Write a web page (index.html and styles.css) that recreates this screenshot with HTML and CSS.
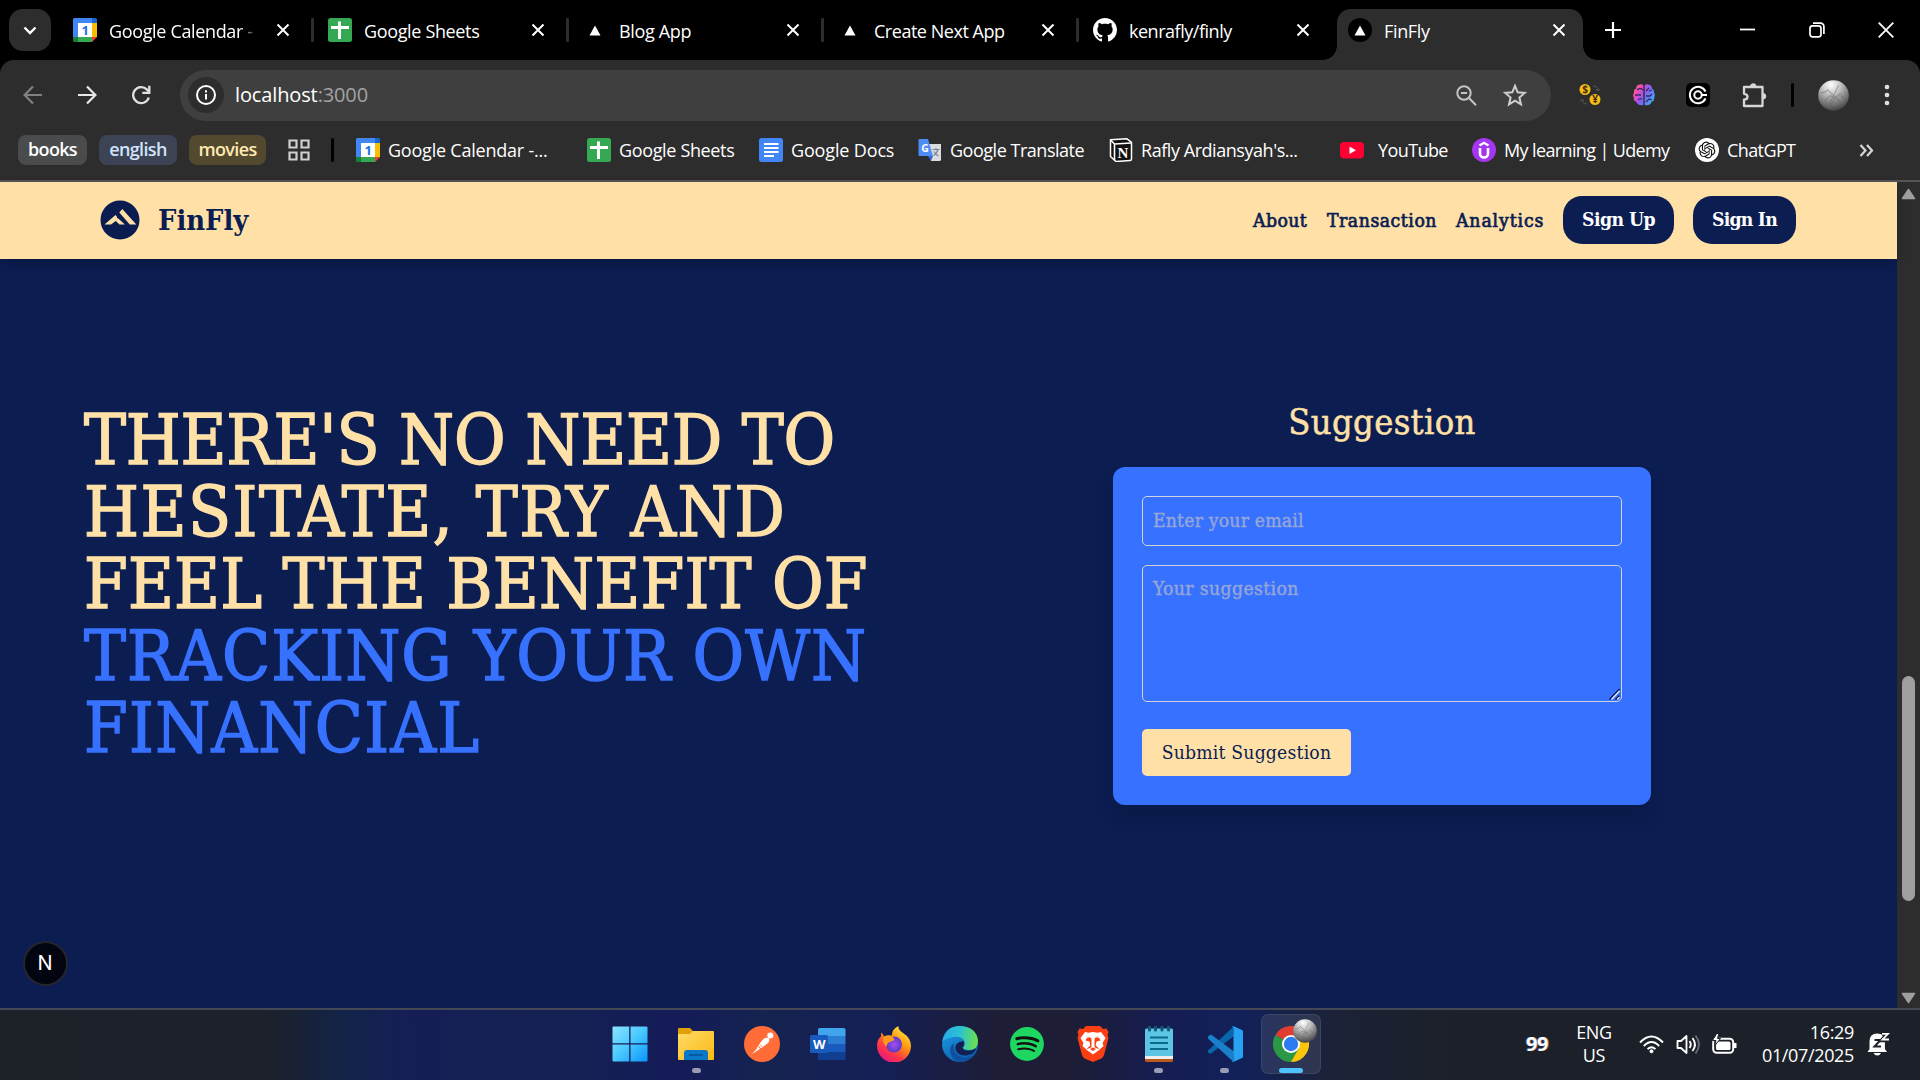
FILE: index.html
```html
<!DOCTYPE html>
<html lang="en">
<head>
<meta charset="utf-8">
<title>FinFly</title>
<link rel="stylesheet" href="styles.css">
</head>
<body>
<svg class="defs" width="0" height="0">
  <defs>
    <symbol id="x" viewBox="0 0 14 14"><path d="M1.5 1.5l11 11M12.5 1.5l-11 11" stroke="currentColor" stroke-width="2" fill="none"/></symbol>
    <symbol id="tri" viewBox="0 0 12 12"><path d="M6 0.5L12 11.5H0z" fill="#fff"/></symbol>
    <symbol id="gcal" viewBox="0 0 24 24">
      <path d="M1.5 0H19v5H0V1.500A1.500 1.500 0 0 1 1.500 0z" fill="#4285f4"/><path d="M0 4h5v15H0z" fill="#4285f4"/>
      <path d="M19 0h3.500A1.500 1.500 0 0 1 24 1.500V5h-5z" fill="#1967d2"/><path d="M19 5h5v14h-5z" fill="#fbbc04"/>
      <path d="M0 19h5v5H1.500A1.500 1.500 0 0 1 0 22.500z" fill="#188038"/><path d="M5 19h14v5H5z" fill="#34a853"/>
      <path d="M19 19h5l-5 5z" fill="#ea4335"/><path d="M5 5h14v14H5z" fill="#fff"/>
      <text x="12" y="16.700" font-family="Open Sans, sans-serif" font-size="13" font-weight="700" fill="#1a73e8" text-anchor="middle">1</text>
    </symbol>
    <symbol id="gsheet" viewBox="0 0 24 24"><rect width="24" height="24" rx="2.500" fill="#34a853"/><path d="M10 3.500h3V8h8v3h-8v10h-3V11H3V8h7z" fill="#fff"/></symbol>
    <symbol id="moon" viewBox="0 0 30 30">
      <defs><radialGradient id="mg" cx=".42" cy=".15" r=".95"><stop offset="0" stop-color="#fff"/><stop offset=".3" stop-color="#c9c9c9"/><stop offset=".6" stop-color="#858585"/><stop offset="1" stop-color="#2c2c2c"/></radialGradient></defs>
      <circle cx="15" cy="15" r="14.800" fill="url(#mg)"/><path d="M3 12q4 1 7-3M6 21l6-6 4 3 6-5M9 9l12 12M20 5l-9 18M12 25l5-9M22 15l4 3" stroke="#666" stroke-width="1" fill="none" opacity=".5"/>
    </symbol>
  </defs>
</svg>

<header class="browser">
  <div class="tabstrip">
    <button class="tab-search"><svg width="14" height="9" viewBox="0 0 14 9"><path d="M1.500 1.500L7 7l5.500-5.500" stroke="#fff" stroke-width="2.400" fill="none"/></svg></button>
    <div class="tab"><svg class="fav"><use href="#gcal"/></svg><span class="tab-title fade">Google Calendar -</span><svg class="close"><use href="#x"/></svg><i class="sep"></i></div>
    <div class="tab"><svg class="fav"><use href="#gsheet"/></svg><span class="tab-title">Google Sheets</span><svg class="close"><use href="#x"/></svg><i class="sep"></i></div>
    <div class="tab"><span class="fav next"><svg><use href="#tri"/></svg></span><span class="tab-title">Blog App</span><svg class="close"><use href="#x"/></svg><i class="sep"></i></div>
    <div class="tab"><span class="fav next"><svg><use href="#tri"/></svg></span><span class="tab-title tight">Create Next App</span><svg class="close"><use href="#x"/></svg><i class="sep"></i></div>
    <div class="tab"><svg class="fav" viewBox="0 0 16 16"><path fill="#fff" d="M8 0C3.580 0 0 3.580 0 8c0 3.540 2.290 6.530 5.470 7.590.4.070.55-.17.55-.38 0-.19-.01-.82-.01-1.490-2.010.37-2.530-.49-2.690-.94-.09-.23-.48-.94-.82-1.130-.28-.15-.68-.52-.01-.53.63-.01 1.080.58 1.230.82.72 1.210 1.870.87 2.330.66.070-.52.28-.87.51-1.070-1.780-.2-3.640-.89-3.640-3.950 0-.87.31-1.590.82-2.150-.08-.2-.36-1.020.08-2.120 0 0 .67-.21 2.200.82.64-.18 1.320-.27 2-.27s1.360.09 2 .27c1.530-1.040 2.200-.82 2.200-.82.44 1.100.16 1.920.08 2.120.51.56.82 1.270.82 2.150 0 3.070-1.870 3.750-3.650 3.950.29.25.54.73.54 1.480 0 1.070-.01 1.930-.01 2.200 0 .21.15.46.55.38A8.010 8.010 0 0 0 16 8c0-4.420-3.580-8-8-8z"/></svg><span class="tab-title tight">kenrafly/finly</span><svg class="close"><use href="#x"/></svg></div>
    <div class="tab active"><span class="fav next disc"><svg><use href="#tri"/></svg></span><span class="tab-title">FinFly</span><svg class="close"><use href="#x"/></svg></div>
    <svg class="new-tab" viewBox="0 0 16 16"><path d="M8 0v16M0 8h16" stroke="#fff" stroke-width="2.200"/></svg>
    <div class="window-controls">
      <svg width="16" height="16" viewBox="0 0 16 16"><path d="M0 7.500h15" stroke="#fff" stroke-width="1.800"/></svg>
      <svg width="16" height="16" viewBox="0 0 16 16" fill="none" stroke="#fff" stroke-width="1.700"><rect x="1" y="3.800" width="11" height="11" rx="2.500"/><path d="M4 1.200h7.500A3.300 3.300 0 0 1 14.900 4.500V12"/></svg>
      <svg width="16" height="16" viewBox="0 0 16 16"><path d="M.7.700l14.600 14.600M15.300.700L.7 15.300" stroke="#fff" stroke-width="1.800"/></svg>
    </div>
  </div>

  <div class="toolbar">
    <div class="nav-icons">
      <svg width="20" height="20" viewBox="0 0 20 20" fill="none" stroke="#808080" stroke-width="2.200"><path d="M19 10H2M10 1.500L1.600 10l8.400 8.500"/></svg>
      <svg width="20" height="20" viewBox="0 0 20 20" fill="none" stroke="#e8e8e8" stroke-width="2.200"><path d="M1 10h17M10 1.500l8.400 8.500-8.400 8.500"/></svg>
      <svg width="20" height="20" viewBox="0 0 20 20" fill="none" stroke="#e0e0e0" stroke-width="2.300"><path d="M17.800 12.500A8 8 0 1 1 16 4.600l2 2.200"/><path d="M18.300.8v7h-7"/></svg>
    </div>
    <div class="omnibox">
      <span class="info"><svg width="20" height="20" viewBox="0 0 20 20"><circle cx="10" cy="10" r="9" fill="none" stroke="#fff" stroke-width="2"/><path d="M10 9v5.500M10 5.300v2.200" stroke="#fff" stroke-width="2"/></svg></span>
      <span class="url">localhost<em>:3000</em></span>
      <svg class="zoom-out" width="21" height="21" viewBox="0 0 21 21" fill="none" stroke="#c4c4c4" stroke-width="2"><circle cx="8" cy="8" r="6.700"/><path d="M5 8h6M13 13l7 7.200"/></svg>
      <svg class="star" width="24" height="24" viewBox="0 0 24 24"><path d="M12 2.800l2.700 6.500 7 .6-5.300 4.600 1.600 6.900-6-3.700-6 3.700 1.600-6.900L2.300 9.900l7-.6z" fill="none" stroke="#cfcfcf" stroke-width="2"/></svg>
    </div>
    <div class="extensions">
      <svg class="e-coins" width="22" height="24" viewBox="0 0 22 24"><circle cx="6" cy="6.500" r="5.500" fill="#f9b916"/><circle cx="16" cy="16.500" r="5.500" fill="#f9b916"/><text x="6" y="10.300" font-size="10" font-weight="700" text-anchor="middle" fill="#40300c" font-family="Open Sans">$</text><text x="16" y="20.300" font-size="10" font-weight="700" text-anchor="middle" fill="#40300c" font-family="Open Sans">¥</text><path d="M14 3q5 0 5 5m-2-2l2 2 2-2M8 21q-5 0-5-5m-2 2l2-2 2 2" stroke="#555" fill="none"/></svg>
      <svg class="e-brain" width="24" height="24" viewBox="0 0 24 24"><defs><linearGradient id="bg" x1="0" y1="0" x2="1" y2=".6"><stop offset="0" stop-color="#ff8a3c"/><stop offset=".3" stop-color="#f748b8"/><stop offset=".6" stop-color="#8a5cf6"/><stop offset="1" stop-color="#3ea6f5"/></linearGradient></defs><path d="M11.300 2.500Q10 .5 7.500 1.500 4 2 4.200 5.500 1.500 6.500 2 9.500.2 12 1.700 14.500 1.500 18 4.500 19q1.500 4 6.800 3zM12.700 2.500Q14 .5 16.500 1.500 20 2 19.800 5.500 22.500 6.500 22 9.500q1.800 2.500.3 5Q22.500 18 19.500 19q-1.500 4-6.800 3z" fill="url(#bg)"/><path d="M5 7q3-3 6 0M3 12h6M6 17q2-2 4-1M14 8l3-3m0 3l3-1M14 13h4l2-2m-6 8l3-3 3 1" stroke="#3a2560" stroke-width="1.300" fill="none"/></svg>
      <svg class="e-c" width="24" height="24" viewBox="0 0 24 24"><rect width="24" height="24" rx="5" fill="#000"/><path d="M19.500 8.500A8.200 8.200 0 1 0 19.500 15.500" fill="none" stroke="#fff" stroke-width="2"/><circle cx="12" cy="12" r="3.700" fill="none" stroke="#fff" stroke-width="2"/><path d="M15 12h6" stroke="#fff" stroke-width="2"/></svg>
      <svg class="e-puzzle" width="26" height="26" viewBox="0 0 26 26"><path d="M3 5h18.500v19H3v-6.300q3.500-.2 3.500-2.900T3 11.800z" fill="none" stroke="#d6d6d6" stroke-width="2.300" stroke-linejoin="round"/><path d="M9.500 4.500a2.800 2.800 0 0 1 5.600 0zM22 11.500a2.800 2.800 0 0 1 0 5.600z" fill="#d6d6d6" stroke="#d6d6d6"/></svg>
      <i class="bar"></i>
      <svg class="avatar" width="31" height="31"><use href="#moon"/></svg>
      <svg class="dots" width="6" height="22" viewBox="0 0 6 22" fill="#e0e0e0"><circle cx="3" cy="3" r="2.300"/><circle cx="3" cy="11" r="2.300"/><circle cx="3" cy="19" r="2.300"/></svg>
    </div>
  </div>

  <div class="bookmarks">
    <span class="chip books">books</span><span class="chip english">english</span><span class="chip movies">movies</span>
    <svg class="grid" width="22" height="22" viewBox="0 0 22 22" fill="none" stroke="#d0d0d0" stroke-width="2.200"><path d="M1.500 1.500h7v7h-7zM13.500 1.500h7v7h-7zM1.500 13.500h7v7h-7zM13.500 13.500h7v7h-7z"/></svg>
    <i class="bar"></i>
    <div class="bm wide cal"><svg><use href="#gcal"/></svg><span>Google Calendar -...</span></div>
    <div class="bm sheets"><svg><use href="#gsheet"/></svg><span>Google Sheets</span></div>
    <div class="bm docs"><svg viewBox="0 0 24 24"><rect width="24" height="24" rx="2.500" fill="#4285f4"/><path d="M5 6h14.500M5 10h14.500M5 14h14.500M5 18h10" stroke="#fff" stroke-width="2"/></svg><span>Google Docs</span></div>
    <div class="bm translate"><svg viewBox="0 0 24 24"><path d="M9 6h14v15.500q0 1.500-1.500 1.500H13z" fill="#dadce0"/><path d="M10 18h5l-2 5z" fill="#3367d6"/><path d="M1.500 1H10l5 17H1.500Q.500 18 .500 17V2q0-1 1-1z" fill="#4e8df6"/><text x="6.800" y="13.500" font-size="10.500" font-weight="700" text-anchor="middle" fill="#fff" font-family="Open Sans">G</text><path d="M14.500 11.500h7M18 10v1.500M20 11.500q-1.500 4.500-4.500 6M16 13.500q1.500 3 4.500 4.500" stroke="#7a8794" stroke-width="1.200" fill="none"/></svg><span>Google Translate</span></div>
    <div class="bm wide rafly"><svg viewBox="0 0 24 24"><path d="M1.500 1.800L18 .8l4.500 3.500V21q0 1.500-1.500 1.600L7 23.500 1.500 18.500z" fill="#111" stroke="#fff" stroke-width="1.500" stroke-linejoin="round"/><path d="M5.500 6L22 5M5.500 6v16.500M5.500 6l-4-4" stroke="#fff" stroke-width="1.600"/><text x="13.800" y="19.500" font-size="15" font-weight="700" text-anchor="middle" fill="#fff" font-family="Liberation Serif">N</text></svg><span>Rafly Ardiansyah's...</span></div>
    <div class="bm youtube"><svg viewBox="0 0 24 24"><rect y="4" width="24" height="16.500" rx="4" fill="#ff0033"/><path d="M9.500 8.500v7.500l6.500-3.700z" fill="#fff"/></svg><span>YouTube</span></div>
    <div class="bm udemy"><svg viewBox="0 0 24 24"><circle cx="12" cy="12" r="12" fill="#a435f0"/><path d="M8 10v5.500a4 4 0 0 0 8 0V10" fill="none" stroke="#fff" stroke-width="2.600"/><path d="M7.500 7.500L12 4.800l4.500 2.700" fill="none" stroke="#fff" stroke-width="2.200"/></svg><span>My learning | Udemy</span></div>
    <div class="bm chatgpt"><svg viewBox="0 0 24 24"><circle cx="12" cy="12" r="12" fill="#fff"/><path transform="translate(3.600 3.600) scale(.7)" fill="#111" d="M22.2819 9.8211a5.9847 5.9847 0 0 0-.5157-4.9108 6.0462 6.0462 0 0 0-6.5098-2.9A6.0651 6.0651 0 0 0 4.9807 4.1818a5.9847 5.9847 0 0 0-3.9977 2.9 6.0462 6.0462 0 0 0 .7427 7.0966 5.98 5.98 0 0 0 .511 4.9107 6.051 6.051 0 0 0 6.5146 2.9001A5.9847 5.9847 0 0 0 13.2599 24a6.0557 6.0557 0 0 0 5.7718-4.2058 5.9894 5.9894 0 0 0 3.9977-2.9001 6.0557 6.0557 0 0 0-.7475-7.0729zm-9.022 12.6081a4.4755 4.4755 0 0 1-2.8764-1.0408l.1419-.0804 4.7783-2.7582a.7948.7948 0 0 0 .3927-.6813v-6.7369l2.02 1.1686a.071.071 0 0 1 .038.052v5.5826a4.504 4.504 0 0 1-4.4945 4.4944zm-9.6607-4.1254a4.4708 4.4708 0 0 1-.5346-3.0137l.142.0852 4.783 2.7582a.7712.7712 0 0 0 .7806 0l5.8428-3.3685v2.3324a.0804.0804 0 0 1-.0332.0615L9.74 19.9502a4.4992 4.4992 0 0 1-6.1408-1.6464zM2.3408 7.8956a4.485 4.485 0 0 1 2.3655-1.9728V11.6a.7664.7664 0 0 0 .3879.6765l5.8144 3.3543-2.0201 1.1685a.0757.0757 0 0 1-.071 0l-4.8303-2.7865A4.504 4.504 0 0 1 2.3408 7.872zm16.5963 3.8558L13.1038 8.364 15.1192 7.2a.0757.0757 0 0 1 .071 0l4.8303 2.7913a4.4944 4.4944 0 0 1-.6765 8.1042v-5.6772a.79.79 0 0 0-.407-.667zm2.0107-3.0231l-.142-.0852-4.7735-2.7818a.7759.7759 0 0 0-.7854 0L9.409 9.2297V6.8974a.0662.0662 0 0 1 .0284-.0615l4.8303-2.7866a4.4992 4.4992 0 0 1 6.6802 4.66zM8.3065 12.863l-2.02-1.1638a.0804.0804 0 0 1-.038-.0567V6.0742a4.4992 4.4992 0 0 1 7.3757-3.4537l-.142.0805L8.704 5.459a.7948.7948 0 0 0-.3927.6813zm1.0976-2.3654l2.602-1.4998 2.6069 1.4998v2.9994l-2.5974 1.4997-2.6067-1.4997Z"/></svg><span>ChatGPT</span></div>
    <svg class="more" width="15" height="13" viewBox="0 0 15 13"><path d="M1.500 1l5 5.500-5 5.500M8 1l5 5.500L8 12" stroke="#d8d8d8" stroke-width="2.200" fill="none"/></svg>
  </div>
</header>

<div class="viewport">
  <div class="page">
    <nav class="site-nav">
      <svg class="logo" viewBox="0 0 40 40"><circle cx="20" cy="20" r="19.500" fill="#0b1c50"/><path d="M4.500 24.500L15.500 15l1.500 1.700v3.300l-6 4.500zM17.500 17.800l7.300 6.700h-5.300l-3.700-3.600zM22.300 9l14 15.500h-6.500L19.300 12.500z" fill="#ffe1a8"/></svg>
      <span class="brand">FinFly</span>
      <a class="link about">About</a><a class="link transaction">Transaction</a><a class="link analytics">Analytics</a>
      <button class="pill up">Sign Up</button><button class="pill in">Sign In</button>
    </nav>
    <main class="content">
      <h1 class="headline">
        <span class="l1">THERE'S NO NEED TO</span>
        <span class="l2">HESITATE, TRY AND</span>
        <span class="l3">FEEL THE BENEFIT OF</span>
        <span class="l4 blue">TRACKING YOUR OWN</span>
        <span class="l5 blue">FINANCIAL</span>
      </h1>
      <section class="suggestion">
        <h2>Suggestion</h2>
        <form class="card">
          <input class="field" type="email" placeholder="Enter your email">
          <div class="area-wrap">
            <textarea class="field area" placeholder="Your suggestion"></textarea>
            <svg class="grip" width="12" height="12" viewBox="0 0 12 12"><path d="M1.500 11.500l10-10.500M7.500 11.500l4-4" stroke="#0b1c50" stroke-width="1.500"/><path d="M3.500 11.500l8-8.500M9.300 11.500l2.200-2.200" stroke="#dfe6fa" stroke-width="1.500"/></svg>
          </div>
          <button class="submit" type="button">Submit Suggestion</button>
        </form>
      </section>
    </main>
    <div class="dev-badge">N</div>
  </div>
  <div class="scrollbar">
    <svg width="15" height="12" viewBox="0 0 15 12"><path d="M7.500 1.500L13.500 10.500h-12z" fill="#9f9f9f" stroke="#9f9f9f" stroke-width="1.500" stroke-linejoin="round"/></svg>
    <i class="thumb"></i>
    <svg width="15" height="12" viewBox="0 0 15 12"><path d="M7.500 10.500L13.500 1.500h-12z" fill="#9f9f9f" stroke="#9f9f9f" stroke-width="1.500" stroke-linejoin="round"/></svg>
  </div>
</div>

<footer class="taskbar">
  <div class="apps">
    <div class="app"><svg viewBox="0 0 36 36"><defs><linearGradient id="wg" x1="0" y1="0" x2="1" y2="1"><stop offset="0" stop-color="#8be4ff"/><stop offset=".5" stop-color="#48c8ff"/><stop offset="1" stop-color="#0a95fb"/></linearGradient></defs><path d="M.5 1.500q0-1 1-1h15.700v16.800H.5zM18.500.500h16q1 0 1 1v15.800h-17zM.5 18.600h16.700v16.900H1.500q-1 0-1-1zM18.500 18.600h17v15.900q0 1-1 1h-16z" fill="url(#wg)"/></svg></div>
    <div class="app run"><svg viewBox="0 0 36 36"><defs><linearGradient id="fg" x1="0" y1="0" x2="1" y2="1"><stop offset="0" stop-color="#ffdc6a"/><stop offset="1" stop-color="#fbb810"/></linearGradient></defs><path d="M0 3q0-1 1-1h11l3 3v5H0z" fill="#e0a008"/><path d="M0 8h12l3-3h20q1 0 1 1v27q0 1-1 1H1q-1 0-1-1z" fill="url(#fg)"/><path d="M6 34v-7q0-3 3-3h18q3 0 3 3v7z" fill="#0a78c9"/><path d="M11 29h14" stroke="#0a4f92" stroke-width="1.500"/></svg></div>
    <div class="app"><svg viewBox="0 0 36 36"><circle cx="18" cy="18" r="18" fill="#ff6c37"/><circle cx="26.300" cy="9.500" r="3" fill="#fff"/><path d="M24.500 12q-3-1-5 1l-5.500 6.500 3 3 7-5.500q2.500-2.500.5-5zM14 20l-1.500 3L8 28l8-5z" fill="#fff"/><path d="M14 17l6 5M13.500 19l4 4" stroke="#ff6c37" stroke-width=".7"/></svg></div>
    <div class="app"><svg viewBox="0 0 36 36"><path d="M8 10V3.500Q8 2 9.500 2h24Q35.500 2 35.500 3.500V10z" fill="#41a5ee"/><path d="M8 10h27.500v8H8z" fill="#2b7cd3"/><path d="M8 18h27.500v8H8z" fill="#185abd"/><path d="M8 26h27.500v6.500q0 1.500-1.500 1.500H9.500Q8 34 8 32.500z" fill="#103f91"/><rect y="9" width="18" height="18" rx="1.500" fill="#185abd"/><text x="9" y="22.700" font-size="13" font-weight="700" text-anchor="middle" fill="#fff" font-family="Open Sans">W</text></svg></div>
    <div class="app"><svg viewBox="0 0 36 36"><defs><linearGradient id="ff" x1=".85" y1="0" x2=".2" y2="1"><stop offset="0" stop-color="#fff44f"/><stop offset=".4" stop-color="#ff980e"/><stop offset=".7" stop-color="#ff3647"/><stop offset="1" stop-color="#e31587"/></linearGradient><radialGradient id="fp"><stop offset="0" stop-color="#a44ef0"/><stop offset="1" stop-color="#5b3bc4"/></radialGradient></defs><path d="M5 6.500q2 1 3 4 3-2 8-1-.5-6 6.500-9.500-.5 4 4.500 7 8 5 8 13A17 17 0 0 1 1 19.500q0-6 4-9z" fill="url(#ff)"/><circle cx="18" cy="18.500" r="8" fill="url(#fp)"/><path d="M7.500 11q4-2 9-.5l2 3.500-6 2.500q-2 1-1.500 4Q6 17 7.500 11z" fill="#ff9a1c"/></svg></div>
    <div class="app"><svg viewBox="0 0 36 36"><defs><linearGradient id="e1" x1="0" y1=".3" x2="1" y2=".4"><stop offset="0" stop-color="#28a8ea"/><stop offset=".5" stop-color="#2cc3d0"/><stop offset="1" stop-color="#6be04a"/></linearGradient><linearGradient id="e2" x1="0" y1="0" x2=".6" y2="1"><stop offset="0" stop-color="#1fa0e8"/><stop offset="1" stop-color="#0a5fb0"/></linearGradient></defs><circle cx="18" cy="18" r="18" fill="url(#e2)"/><path d="M.5 15Q3 0 18 0q17 1 18 15 0 9-9 9-6 0-6-2.500 3-3 1-7Q17 7 .5 15z" fill="url(#e1)"/><path d="M21.500 15q1.500 4-1 6.500 0 3 6.500 3.200 4 0 7-2.400-1 4-5 6-11 3.500-15-3.500-3-8 7.500-9.800z" fill="#121f50"/><path d="M12 17q-2 11 8 14 6 2 12-2.500-6 8-14 7.500Q8 33 8 24q0-4 4-7z" fill="#0f4f9d"/></svg></div>
    <div class="app"><svg viewBox="-.35 -.35 24.700 24.700"><circle cx="12" cy="12" r="10" fill="#111"/><path transform="translate(.4 .4) scale(.967)" fill="#1ed760" d="M12 0C5.400 0 0 5.400 0 12s5.400 12 12 12 12-5.400 12-12S18.660 0 12 0zm5.521 17.340c-.24.359-.66.48-1.021.24-2.820-1.740-6.360-2.101-10.561-1.141-.418.122-.779-.179-.899-.539-.12-.421.18-.78.54-.9 4.560-1.021 8.520-.6 11.640 1.320.42.18.479.659.301 1.020zm1.440-3.300c-.301.42-.841.6-1.262.3-3.239-1.980-8.159-2.580-11.939-1.380-.479.12-1.020-.12-1.140-.6-.12-.48.12-1.021.6-1.141C9.600 9.900 15 10.561 18.720 12.840c.361.181.54.78.241 1.200zm.12-3.360C15.240 8.400 8.820 8.160 5.160 9.301c-.6.179-1.200-.181-1.380-.721-.18-.601.18-1.200.72-1.381 4.260-1.260 11.280-1.020 15.721 1.621.539.3.719 1.020.419 1.560-.299.421-1.020.599-1.559.3z"/></svg></div>
    <div class="app"><svg viewBox="0 0 36 36"><path d="M11 0h14l3 3 3.500-.5L33.500 6l-1 3 1 3-4.500 17q-1 3-5 4.500L18 36l-6-2.500q-4-1.500-5-4.500L2.500 12l1-3-1-3 2-3.500L8 3z" fill="#fb3f12"/><path d="M10 6l3.500.8L18 6l4.500.8L26 6l4.500 6-3 5 1 3-5 4.500L18 28.500l-5.500-4-5-4.500 1-3-3-5z" fill="#fff"/><path d="M11 10.500l5 1.500-4-.2-1.500 2.700 4 1 .8 4-3.300 3 .5.500 4-1.700V13l-1.500-2zM25 10.500L20 12l4-.2 1.500 2.700-4 1-.8 4 3.300 3-.5.500-4-1.700V13l1.500-2zM15 23l3-1.500 3 1.500-3 2z" fill="#fb3f12"/></svg></div>
    <div class="app run"><svg viewBox="0 0 36 36"><rect x="4" y="28" width="28" height="8" rx="1.500" fill="#b9591a"/><rect x="4" y="26" width="28" height="7" fill="#eee"/><path d="M4 4q0-1.500 1.500-1.500h25Q32 2.500 32 4v26H4z" fill="#5cc5e3"/><path d="M9 11.500h18M9 17h18M9 23h18" stroke="#0b6b8c" stroke-width="2"/><path d="M8.500 1v3M14.500 1v3M21 1v3M27.500 1v3" stroke="#0e5a78" stroke-width="3" stroke-linecap="round"/></svg></div>
    <div class="app run"><svg viewBox="0 0 36 36"><path d="M1 24.500L26 1l1 9L4 27.500q-1.500.5-3-1z" fill="#0a66ac"/><path d="M1 10.500l3-2 23 17-1 10L1 12.500z" fill="#1b80cc"/><path d="M26 0l9 4q1 .5 1 1.500v25q0 1-1 1.500l-9 4q-1.500 0 .5-2V2q-2-1.500-.5-2z" fill="#27a2f2"/></svg></div>
    <div class="app current"><svg viewBox="0 0 36 36"><path d="M18 18L2.400 9A18 18 0 0 1 33.600 9z" fill="#e23b30"/><path d="M18 18l15.600-9A18 18 0 0 1 18 36z" fill="#fdc60b"/><path d="M2.400 9A18 18 0 0 0 18 36l7.800-13.500z" fill="#2b9847"/><circle cx="18" cy="18" r="9" fill="#fff"/><circle cx="18" cy="18" r="7.200" fill="#2c7bf0"/></svg><svg class="badge"><use href="#moon"/></svg></div>
  </div>
  <div class="tray">
    <span class="nines">99</span>
    <span class="lang">ENG<br>US</span>
    <svg class="wifi" width="25" height="19" viewBox="0 0 25 19" fill="none" stroke="#fff" stroke-width="1.900"><path d="M1 7.500q11.500-12 23 0M4.800 11q7.700-8 15.400 0M8.500 14.200q4-4 8 0"/><circle cx="12.500" cy="16.300" r="1.500" fill="#fff" stroke-width="1"/></svg>
    <svg class="vol" width="25" height="21" viewBox="0 0 25 21" fill="none" stroke="#fff" stroke-width="1.800"><path d="M1.500 7h3.500l5.500-5v17L5 14H1.500z" stroke-linejoin="round"/><path d="M13.500 7q2.500 3.500 0 7M16.500 4q5 6.500 0 13"/><path d="M19.500 1.500q7 9 0 18" stroke="#6a6f76"/></svg>
    <svg class="bat" width="25" height="20" viewBox="0 0 25 20"><rect x="1.200" y="4.700" width="20" height="14" rx="3.500" fill="none" stroke="#fff" stroke-width="2"/><rect x="4" y="7.500" width="14.500" height="8.500" rx="1.500" fill="#fff"/><path d="M22 9h2.500v5H22z" fill="#fff"/><path d="M5-1L.5 6.500H4L2.500 12 8.500 4.500H5.500L7-1z" fill="#fff" stroke="#1c2129" stroke-width="1"/></svg>
    <span class="clock">16:29<br>01/07/2025</span>
    <svg class="bell" width="23" height="24" viewBox="0 0 23 24"><path d="M2.500 17V9.500q0-8 7.700-8 7.700 0 7.700 8V17l2.100 3H.5z" fill="#fff"/><path d="M6.500 21h7.500q-1.200 2.500-3.700 2.500T6.500 21z" fill="#fff"/><path d="M7.500 8h6l-6 6.500h6.500" fill="none" stroke="#1c2129" stroke-width="2"/><path d="M15 1.500h6L15.500 8H22" fill="none" stroke="#1c2129" stroke-width="4.500"/><path d="M15 1.800h6L15.500 7.500H22" fill="none" stroke="#fff" stroke-width="1.800"/></svg>
  </div>
</footer>
</body>
</html>
```

FILE: styles.css
```css
* { box-sizing: border-box; margin: 0; padding: 0; }
body { width: 1920px; height: 1080px; overflow: hidden; display: flex; flex-direction: column; background: #000; color: #fff; font: 18px/24px "Open Sans", sans-serif; letter-spacing: -.35px; }
svg { display: block; flex: none; }
.defs { position: absolute; }
button { border: 0; font: inherit; letter-spacing: inherit; }
.bar { width: 3px; height: 24px; background: #000; border-radius: 2px; flex: none; }

/* browser frame */
.browser { height: 182px; flex: none; }
.tabstrip { height: 60px; display: flex; align-items: center; padding-left: 9px; }
.tab-search { width: 42px; height: 42px; border-radius: 14px; background: #2d2d2d; display: grid; place-items: center; margin-right: 8px; }
.tab { width: 255px; height: 51px; display: flex; align-items: center; padding-left: 14px; flex: none; }
.fav { width: 24px; height: 24px; flex: none; }
.next { display: grid; place-items: center; }
.next svg { width: 12px; height: 11px; }
.disc { background: #000; border-radius: 50%; }
.tab-title { flex: 1; margin-left: 12px; white-space: nowrap; overflow: hidden; padding-top: 2px; }
.tight { letter-spacing: -.47px; }
.fade { -webkit-mask-image: linear-gradient(90deg, #000 130px, rgba(0, 0, 0, .4) 141px, transparent 152px); }
.close { width: 14px; height: 14px; margin-right: 21px; }
.tab .sep { width: 3px; height: 24px; border-radius: 1px; background: #2d2d2d; }
.tab:not(:has(.sep)) .close { margin-right: 24px; }
.tab.active { width: 246px; height: 51px; background: #2d2d2d; border-radius: 14px 14px 0 0; margin: 9px 0 0 3px; padding: 0 0 9px 11px; position: relative; }
.tab.active .close { margin-right: 17px; }
.tab.active::before, .tab.active::after { content: ""; position: absolute; bottom: 0; width: 14px; height: 14px; }
.tab.active::before { left: -14px; background: radial-gradient(circle at 0 0, transparent 13.5px, #2d2d2d 14px); }
.tab.active::after { right: -14px; background: radial-gradient(circle at 100% 0, transparent 13.5px, #2d2d2d 14px); }
.new-tab { width: 16px; height: 16px; margin-left: 22px; }
.window-controls { display: flex; gap: 53px; margin-left: auto; padding-right: 26px; }

.toolbar { height: 70px; background: #2d2d2d; border-radius: 14px 14px 0 0; display: flex; align-items: center; }
.nav-icons { display: flex; gap: 34px; width: 180px; padding-left: 23px; }
.omnibox { width: 1371px; height: 51px; border-radius: 26px; background: #3f3f3f; display: flex; align-items: center; padding-left: 8px; }
.info { width: 36px; height: 36px; border-radius: 50%; background: #2d2d2d; display: grid; place-items: center; }
.url { margin-left: 11px; font-size: 20px; letter-spacing: -.13px; }
.url em { font-style: normal; color: #a3a3a3; }
.zoom-out { margin-left: auto; }
.star { margin: 0 24px 0 26px; }
.extensions { display: flex; align-items: center; padding-left: 28px; }
.e-brain { margin-left: 31px; }
.e-c { margin-left: 30px; }
.e-puzzle { margin-left: 31px; }
.extensions .bar { margin-left: 24px; }
.avatar { margin-left: 24px; }
.dots { margin-left: 35px; }

.bookmarks { height: 52px; background: #2d2d2d; border-bottom: 2px solid #555; display: flex; align-items: center; padding: 0 46px 10px 18px; }
.chip { height: 30px; border-radius: 8px; margin-right: 12px; font-weight: 600; line-height: 28px; text-align: center; letter-spacing: -.65px; flex: none; }
.books { width: 69px; background: #4a4b4c; }
.english { width: 78px; background: #3b4354; color: #d3e3fd; }
.movies { width: 77px; background: #53492f; color: #ffe9b0; }
.grid { margin: 0 21px 0 10px; }
.bookmarks .bar { margin-right: 22px; }
.bm { display: flex; align-items: center; margin-right: 24px; white-space: nowrap; flex: none; }
.bm svg { width: 24px; height: 24px; margin-right: 8px; }
.bm span { padding-bottom: 1px; }
.wide { width: 207px; }
.cal { letter-spacing: -.22px; }
.sheets { width: 148px; }
.docs { width: 135px; letter-spacing: -.15px; }
.translate { width: 167px; letter-spacing: -.48px; }
.rafly { letter-spacing: -.45px; }
.youtube { width: 108px; letter-spacing: -.6px; }
.youtube svg { margin-right: 14px; }
.udemy { width: 199px; letter-spacing: -.63px; }
.chatgpt { letter-spacing: -.6px; margin-right: 0; }
.more { margin-left: auto; }

/* web page */
.viewport { height: 826px; display: flex; flex: none; }
.page { width: 1897px; background: #0b1d51; position: relative; font-family: "DejaVu Serif Condensed", "DejaVu Serif", serif; font-stretch: condensed; font-size: 19.2px; }
.site-nav { height: 77px; background: #ffe1a8; color: #0b1d51; display: flex; align-items: center; padding: 0 101px 1px 100px; box-shadow: 0 4px 10px rgba(0, 0, 0, .2); }
.logo { width: 40px; height: 40px; }
.brand { margin: 0 auto 0 18px; font-size: 28.800px; line-height: 40px; font-weight: 700; letter-spacing: 0; }
.link { -webkit-text-stroke: .7px #0b1d51; white-space: nowrap; padding-top: 1px; }
.about { width: 74px; letter-spacing: .45px; }
.transaction { width: 129px; letter-spacing: .55px; }
.analytics { width: 107px; letter-spacing: .9px; }
.pill { height: 48px; margin-bottom: 1px; border-radius: 19px; background: #0b1d51; color: #fff; font-weight: 700; padding-top: 1px; }
.up { width: 111px; letter-spacing: -.55px; }
.in { width: 103px; margin-left: 19px; letter-spacing: -.75px; }
.content { display: flex; }
.headline { width: 1030px; padding: 145px 0 0 84px; font-size: 70px; line-height: 72px; font-weight: 400; color: #ffe1a8; -webkit-text-stroke: 1.500px; }
.headline span { display: block; white-space: nowrap; }
.headline .blue { color: #3771ff; }
.l1 { letter-spacing: -.2px; }
.l2 { letter-spacing: 1.500px; }
.l3 { letter-spacing: .22px; }
.l4 { letter-spacing: 1.030px; }
.l5 { letter-spacing: 1.300px; }
.suggestion { width: 538px; margin-left: 83px; padding-top: 139px; }
.suggestion h2 { font-size: 36px; line-height: 48px; font-weight: 400; color: #ffe1a8; text-align: center; letter-spacing: .35px; -webkit-text-stroke: .5px; margin-bottom: 21px; }
.headline, .suggestion { flex: none; }
.card { height: 338px; border-radius: 12px; background: #3771ff; padding: 29px; display: flex; flex-direction: column; align-items: flex-start; box-shadow: 0 12px 18px rgba(0, 0, 0, .12); }
.field { display: block; width: 480px; height: 50px; border: 1px solid #d1d5db; border-radius: 5px; background: transparent; padding: 0 10px 1px; font: inherit; letter-spacing: .2px; outline: 0; color: #0b1d51; }
.field::placeholder { opacity: 1; color: #96a6d8; -webkit-text-stroke: .4px; }
.area-wrap { position: relative; margin: 19px 0 27px; }
.area { height: 137px; padding: 9px 10px; line-height: 28px; letter-spacing: .38px; resize: none; }
.grip { position: absolute; right: 2px; bottom: 2px; }
.submit { width: 209px; height: 48px; border-radius: 5px; background: #ffe1a8; color: #0b1d51; letter-spacing: .18px; padding-top: 1px; }
.dev-badge { position: absolute; left: 23px; top: 759px; width: 45px; height: 45px; border-radius: 50%; background: #02040f; border: 2px solid #23252f; text-align: center; font: 400 20px/41px Inter, sans-serif; padding-right: 1px; letter-spacing: 0; }
.scrollbar { width: 23px; background: #2d2d2d; display: flex; flex-direction: column; align-items: center; padding: 6px 0 4px; }
.thumb { width: 13px; height: 225px; border-radius: 7px; background: #9f9f9f; margin: 476px 0 auto; }

/* taskbar */
.taskbar { height: 72px; border-top: 2px solid #444754; display: flex; align-items: center; padding-bottom: 2px; background: linear-gradient(90deg, #1d2229 0, #1c212b 270px, #12234a 350px, #151e55 400px, #142152 560px, #141b58 680px, #152350 760px, #141f55 880px, #1e1d36 1000px, #1d1d38 1080px, #151d52 1160px, #12205a 1240px, #1b2238 1330px, #1c2129 1450px, #1c2129 100%); }
.apps { display: flex; padding-left: 600px; }
.app { width: 60px; height: 60px; margin-right: 6.100px; display: grid; place-items: center; position: relative; flex: none; }
.app > svg { width: 36px; height: 36px; }
.run::after, .current::after { content: ""; position: absolute; bottom: 1px; left: 25.500px; width: 9px; height: 5px; border-radius: 3px; background: #9a9cb3; }
.current { background: rgba(255, 255, 255, .09); border: 1px solid rgba(255, 255, 255, .08); border-radius: 7px; }
.current::after { left: 17px; width: 24px; bottom: 0; background: #4cc2ff; }
.app .badge { position: absolute; width: 24px; height: 24px; left: 31px; top: 4px; }
.tray { margin-left: auto; display: flex; align-items: center; line-height: 23.500px; padding-right: 30px; }
.nines { font-weight: 700; font-size: 20px; width: 38px; text-shadow: -1px 0 #3b62b5, 1px 0 #a35a1c; }
.lang { width: 60px; text-align: center; }
.wifi { margin-left: 15px; }
.vol { margin-left: 12px; }
.bat { margin-left: 11px; }
.clock { width: 117px; text-align: right; }
.bell { margin-left: 13px; }
```
